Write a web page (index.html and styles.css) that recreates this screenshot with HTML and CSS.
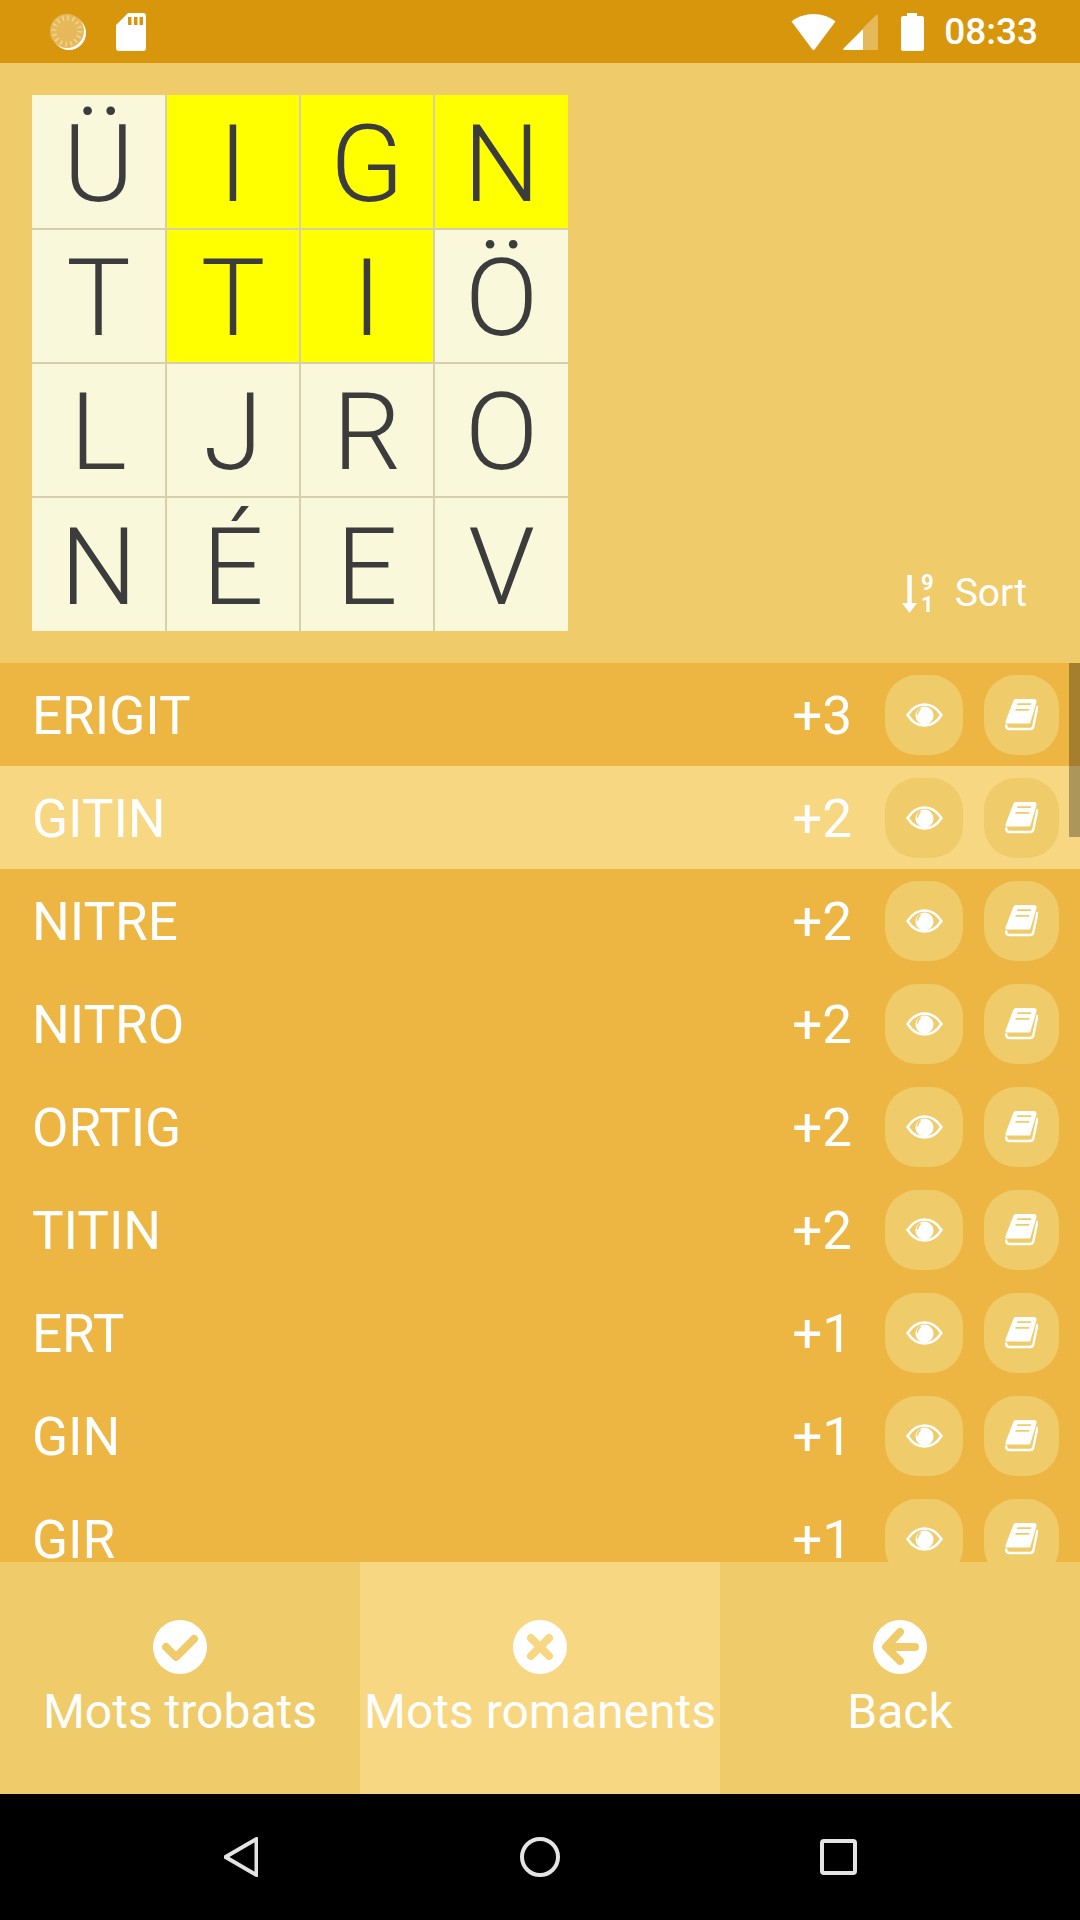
FILE: index.html
```html
<!DOCTYPE html>
<html lang="ca">
  <head>
    <meta charset="UTF-8" />
    <meta name="viewport" content="width=device-width, initial-scale=1.0" />
    <title>Mots romanents</title>
    <link rel="stylesheet" href="styles.css">
  </head>
  <body>
    <svg class="defs" width="0" height="0">
      <symbol id="eye" viewBox="0 0 37 24">
        <path fill="none" stroke="#fff" stroke-width="2.6" d="M1.6 12C6 5.200 12 1.500 18.500 1.500S31 5.200 35.400 12C31 18.800 25 22.500 18.500 22.500S6 18.800 1.600 12Z"/>
        <path fill="#fff" fill-rule="evenodd" d="M18.500 3.500a9 9 0 1 1-.01 0ZM13.500 5.500a7.500 7.500 0 0 0-2.700 6.300c.9.2 1.500-.3 1.600-1a6 6 0 0 1 2.300-4.300c.6-.8-.2-1.600-1.200-1Z"/>
      </symbol>
      <symbol id="book" viewBox="0 0 33 32">
        <path fill="#fff" fill-rule="evenodd" d="M11 0H29C31 0 32 1.500 31.400 3.500L25.500 23.200C25.200 24.200 24.500 24.600 23.500 24.600H4C2.300 24.600 1 25 .6 24C.3 23.300.5 22.300.9 21.300L8.200 2.200C8.800.8 9.700 0 11 0ZM12.500 4.200 12 6H25.800L26.300 4.200ZM10.800 10 10.200 11.800H24L24.500 10Z"/>
        <path fill="none" stroke="#fff" stroke-width="2.400" stroke-linecap="round" d="M1.200 26.500C1.200 28.600 2.500 30 4.500 30H25C27 30 27.800 29 28.300 27.500L32.300 8"/>
      </symbol>
    </svg>

    <div class="statusBar">
      <div class="statusLeft">
        <svg class="statusSun" width="38" height="38" viewBox="0 0 38 38">
          <circle cx="20" cy="20" r="17" fill="#fff"/>
          <circle cx="18" cy="18" r="17" fill="#E5B85A"/>
          <circle cx="18" cy="18" r="13" fill="none" stroke="#EFD391" stroke-width="5" stroke-dasharray="1.600 3.500"/>
        </svg>
        <svg width="30" height="38" viewBox="0 0 30 38">
          <path fill="#fff" fill-rule="evenodd" d="M12 0H27C29 0 30 1 30 3V35C30 37 29 38 27 38H3C1 38 0 37 0 35V12ZM12 4V12H15.500V4ZM18 4V12H21.500V4ZM23.500 4V12H27V4Z"/>
        </svg>
      </div>
      <div class="statusRight">
        <svg width="45" height="38" viewBox="0 0 45 38">
          <path fill="#fff" d="M22.500 1C31 1 38.500 3.800 44.500 8.500L24 36C23 37.400 22 37.400 21 36L.5 8.500C6.500 3.800 14 1 22.500 1Z"/>
        </svg>
        <svg class="statusSignal" width="35" height="36" viewBox="0 0 35 36">
          <path fill="#E5B85A" d="M20 14 33 1C34 0 35 .5 35 2V36H20Z"/>
          <path fill="#fff" d="M20 15V36H1C0 36 0 35 .5 34.500Z"/>
        </svg>
        <svg class="statusBattery" width="23" height="38" viewBox="0 0 23 38">
          <path fill="#fff" d="M6 0H16V3H21C22 3 23 4 23 5V36C23 37 22 38 21 38H2C1 38 0 37 0 36V5C0 4 1 3 2 3H6Z"/>
        </svg>
        <span class="statusTime">08:33</span>
      </div>
    </div>

    <div class="topArea">
      <div class="letterGrid">
        <div class="cell">Ü</div>
        <div class="cell picked">I</div>
        <div class="cell picked">G</div>
        <div class="cell picked">N</div>
        <div class="cell">T</div>
        <div class="cell picked">T</div>
        <div class="cell picked">I</div>
        <div class="cell">Ö</div>
        <div class="cell">L</div>
        <div class="cell">J</div>
        <div class="cell">R</div>
        <div class="cell">O</div>
        <div class="cell">N</div>
        <div class="cell">É</div>
        <div class="cell">E</div>
        <div class="cell">V</div>
      </div>
      <div class="sortButton">
        <svg width="15" height="38" viewBox="0 0 15 38">
          <path fill="#fff" d="M5.300 0H9.700V28H15L7.500 38 0 28H5.300Z"/>
        </svg>
        <div class="sortDigits">
          <span>9</span>
          <span>1</span>
        </div>
        <span class="sortLabel">Sort</span>
      </div>
    </div>

    <div class="wordList">
      <div class="scrollThumb"></div>
      <div class="wordRow">
        <span class="word">ERIGIT</span><span class="score">+3</span>
        <span class="iconBtn eyeBtn"><svg width="37" height="24"><use href="#eye"/></svg></span>
        <span class="iconBtn bookBtn"><svg width="33" height="32"><use href="#book"/></svg></span>
      </div>
      <div class="wordRow current">
        <span class="word">GITIN</span><span class="score">+2</span>
        <span class="iconBtn eyeBtn"><svg width="37" height="24"><use href="#eye"/></svg></span>
        <span class="iconBtn bookBtn"><svg width="33" height="32"><use href="#book"/></svg></span>
      </div>
      <div class="wordRow">
        <span class="word">NITRE</span><span class="score">+2</span>
        <span class="iconBtn eyeBtn"><svg width="37" height="24"><use href="#eye"/></svg></span>
        <span class="iconBtn bookBtn"><svg width="33" height="32"><use href="#book"/></svg></span>
      </div>
      <div class="wordRow">
        <span class="word">NITRO</span><span class="score">+2</span>
        <span class="iconBtn eyeBtn"><svg width="37" height="24"><use href="#eye"/></svg></span>
        <span class="iconBtn bookBtn"><svg width="33" height="32"><use href="#book"/></svg></span>
      </div>
      <div class="wordRow">
        <span class="word">ORTIG</span><span class="score">+2</span>
        <span class="iconBtn eyeBtn"><svg width="37" height="24"><use href="#eye"/></svg></span>
        <span class="iconBtn bookBtn"><svg width="33" height="32"><use href="#book"/></svg></span>
      </div>
      <div class="wordRow">
        <span class="word">TITIN</span><span class="score">+2</span>
        <span class="iconBtn eyeBtn"><svg width="37" height="24"><use href="#eye"/></svg></span>
        <span class="iconBtn bookBtn"><svg width="33" height="32"><use href="#book"/></svg></span>
      </div>
      <div class="wordRow">
        <span class="word">ERT</span><span class="score">+1</span>
        <span class="iconBtn eyeBtn"><svg width="37" height="24"><use href="#eye"/></svg></span>
        <span class="iconBtn bookBtn"><svg width="33" height="32"><use href="#book"/></svg></span>
      </div>
      <div class="wordRow">
        <span class="word">GIN</span><span class="score">+1</span>
        <span class="iconBtn eyeBtn"><svg width="37" height="24"><use href="#eye"/></svg></span>
        <span class="iconBtn bookBtn"><svg width="33" height="32"><use href="#book"/></svg></span>
      </div>
      <div class="wordRow">
        <span class="word">GIR</span><span class="score">+1</span>
        <span class="iconBtn eyeBtn"><svg width="37" height="24"><use href="#eye"/></svg></span>
        <span class="iconBtn bookBtn"><svg width="33" height="32"><use href="#book"/></svg></span>
      </div>
    </div>

    <div class="tabBar">
      <div class="tab">
        <svg width="54" height="54" viewBox="0 0 54 54">
          <circle cx="27" cy="27" r="27" fill="#fff"/>
          <path class="tabMark" d="M13 27 23 37 41 19"/>
        </svg>
        <span>Mots trobats</span>
      </div>
      <div class="tab active">
        <svg width="54" height="54" viewBox="0 0 54 54">
          <circle cx="27" cy="27" r="27" fill="#fff"/>
          <path class="tabMark" d="M18 18 36 36M36 18 18 36"/>
        </svg>
        <span>Mots romanents</span>
      </div>
      <div class="tab">
        <svg width="54" height="54" viewBox="0 0 54 54">
          <circle cx="27" cy="27" r="27" fill="#fff"/>
          <path class="tabMark" d="M27 12 13 27 27 41M14 27H42"/>
        </svg>
        <span>Back</span>
      </div>
    </div>

    <div class="navBar">
      <svg width="34" height="40" viewBox="0 0 34 40">
        <path class="navShape" d="M32.500 2V38L1.500 20Z"/>
      </svg>
      <svg class="navHome" width="40" height="40" viewBox="0 0 40 40">
        <circle class="navShape" cx="20" cy="20" r="18"/>
      </svg>
      <svg width="37" height="36" viewBox="0 0 37 36">
        <rect class="navShape" x="2" y="2" width="33" height="32" rx="2"/>
      </svg>
    </div>
  </body>
</html>
```

FILE: styles.css
```css
* {
  box-sizing: border-box;
}

body {
  margin: 0;
  width: 1080px;
  height: 1920px;
  overflow: hidden;
  display: flex;
  flex-direction: column;
  font-family: Roboto, sans-serif;
  background-color: #efcb6a;
  color: #fff;
}

.defs {
  position: absolute;
}

/* status bar */
.statusBar {
  height: 63px;
  flex: none;
  display: flex;
  justify-content: space-between;
  align-items: center;
  padding: 0 42px 0 49px;
  background-color: #d8960d;
}

.statusLeft,
.statusRight {
  display: flex;
  align-items: center;
}

.statusLeft {
  gap: 29px;
}

.statusSignal {
  margin-left: 7px;
}

.statusBattery {
  margin-left: 23px;
}

.statusTime {
  margin-left: 20px;
  font-size: 37px;
  font-weight: 500;
}

/* grid with the letters */
.topArea {
  height: 600px;
  flex: none;
  display: flex;
  justify-content: space-between;
  padding: 32px 0 0 32px;
}

.letterGrid {
  width: 536px;
  height: 536px;
  display: grid;
  grid-template-columns: 133px 132px 132px 133px;
  grid-template-rows: 133px 132px 132px 133px;
  gap: 2px;
  background-color: #d5d0aa;
}

.cell {
  display: flex;
  align-items: center;
  justify-content: center;
  padding-top: 4px;
  background-color: #f9f8da;
  color: #3c3c3c;
  font-size: 108px;
  font-weight: 300;
  line-height: 1;
}

.picked {
  background-color: #ffff00;
}

.sortButton {
  align-self: flex-start;
  display: flex;
  align-items: center;
  margin: 477px 53px 0 0;
  font-size: 39px;
}

.sortDigits {
  display: flex;
  flex-direction: column;
  margin-left: 4px;
  font-size: 22px;
  font-weight: 700;
  line-height: 22px;
}

.sortLabel {
  margin-left: 21px;
  line-height: 46px;
  margin-top: -2px;
}

/* list of words */
.wordList {
  position: relative;
  height: 899px;
  flex: none;
  overflow: hidden;
  background-color: #edb642;
}

.scrollThumb {
  position: absolute;
  top: 0;
  right: 0;
  width: 11px;
  height: 174px;
  background-color: rgba(0, 0, 0, 0.3);
}

.wordRow {
  height: 103px;
  display: flex;
  align-items: center;
  padding: 0 21px 0 32px;
  font-size: 53px;
}

.current {
  background-color: #f8d782;
}

.word {
  flex: 1;
  padding-top: 3px;
}

.score {
  width: 64px;
  margin-right: 33px;
  padding-top: 3px;
  text-align: right;
}

.iconBtn {
  height: 80px;
  display: flex;
  align-items: center;
  justify-content: center;
  border-radius: 32px;
  background-color: #efcb6a;
}

.eyeBtn {
  width: 78px;
}

.bookBtn {
  width: 75px;
  margin-left: 21px;
}

/* bottom tabs */
.tabBar {
  height: 232px;
  flex: none;
  display: flex;
}

.tab {
  width: 360px;
  display: flex;
  flex-direction: column;
  align-items: center;
  padding-top: 58px;
  font-size: 48px;
  line-height: 54px;
  white-space: nowrap;
}

.tab span {
  margin-top: 11px;
}

.tabMark {
  fill: none;
  stroke: #efcb6a;
  stroke-width: 8;
  stroke-linecap: round;
  stroke-linejoin: round;
}

.active {
  background-color: #f8d782;
}

.active .tabMark {
  stroke: #f8d782;
}

/* android buttons */
.navBar {
  flex: 1;
  display: flex;
  align-items: center;
  justify-content: center;
  gap: 260px;
  background-color: #000;
}

.navHome {
  margin-left: 2px;
}

.navShape {
  fill: none;
  stroke: #e4e4e4;
  stroke-width: 4;
  stroke-linejoin: round;
}
```
